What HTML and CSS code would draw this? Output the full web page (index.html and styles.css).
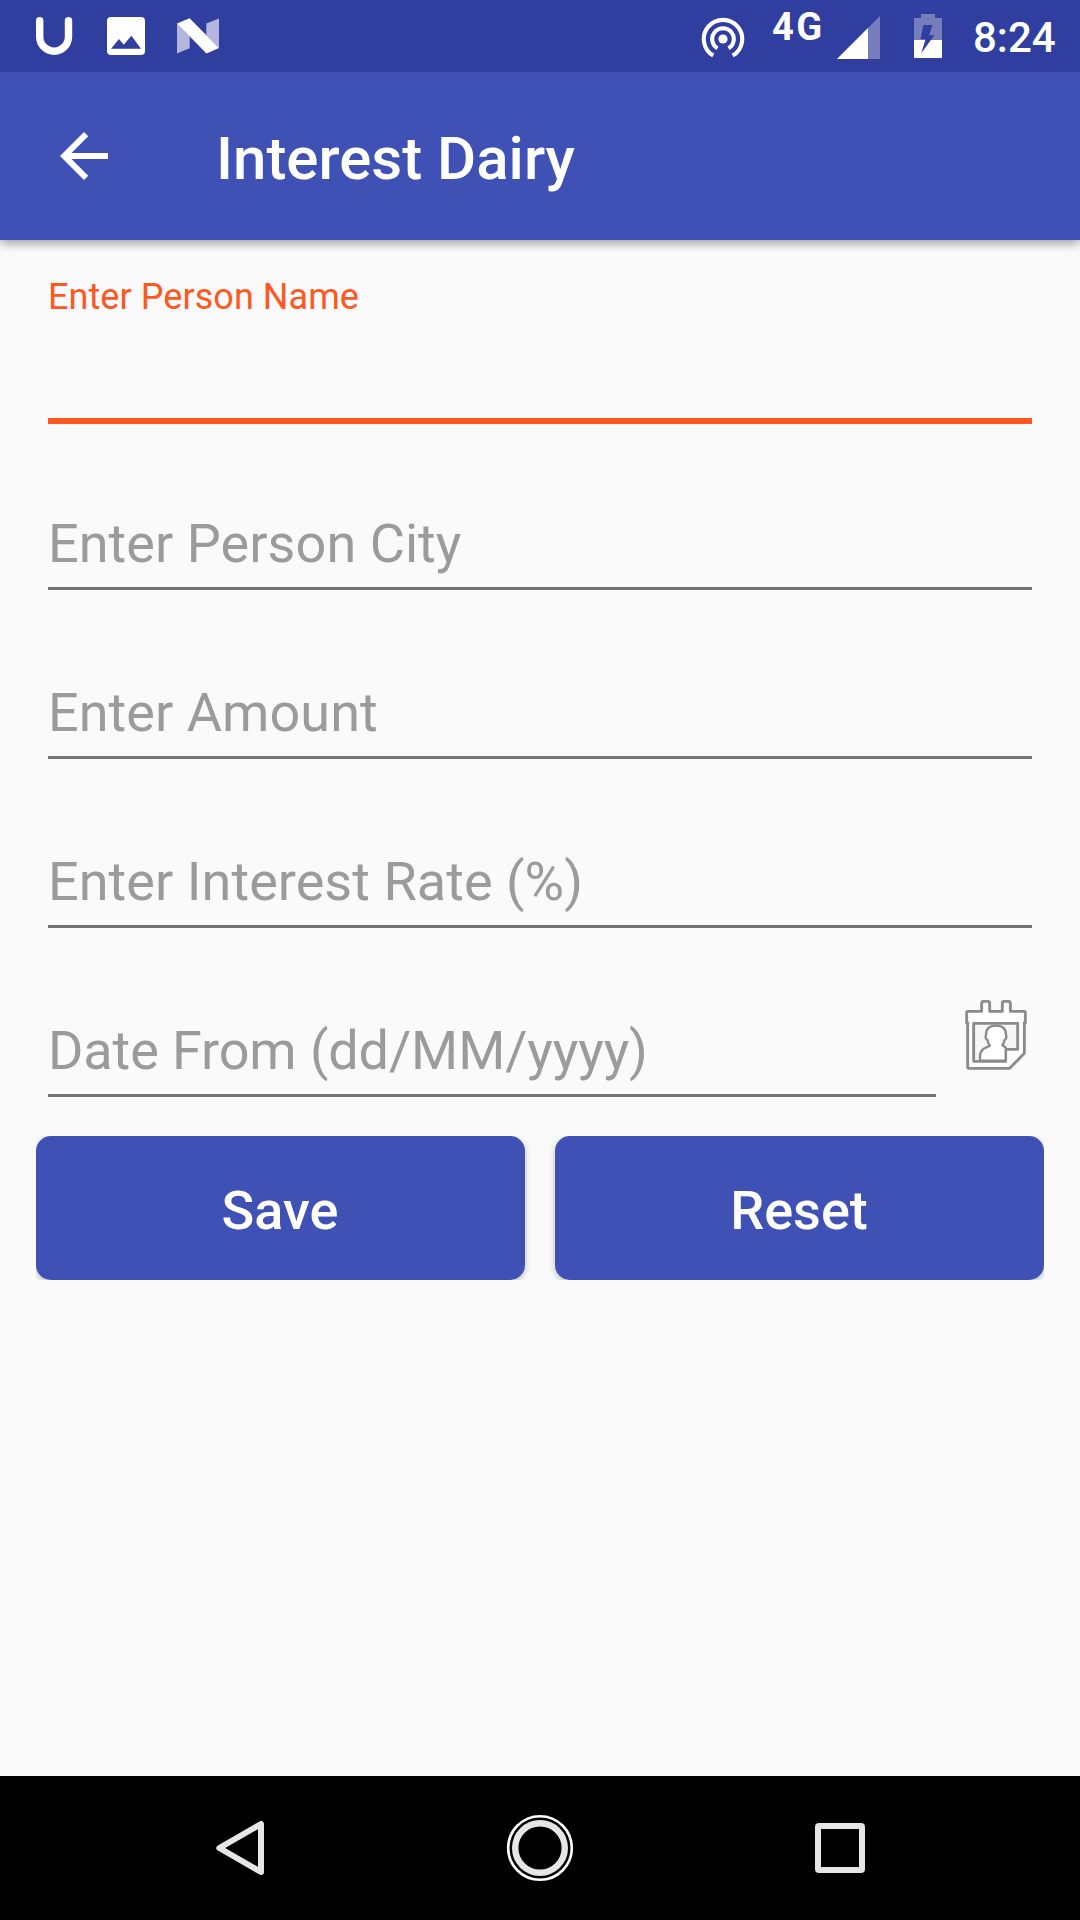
FILE: index.html
```html
<!DOCTYPE html>
<html lang="en">
<head>
<meta charset="utf-8">
<title>Interest Dairy</title>
<link rel="stylesheet" href="styles.css">
</head>
<body>
<div class="screen">
  <div class="status-bar">
    <div class="status-left">
      <svg width="38" height="40" viewBox="35 16 38 40"><path d="M39.7 20.7V36.8a14.4 14.4 0 0 0 28.8 0V20.7" fill="none" stroke="#fff" stroke-width="7.4" stroke-linecap="round"/></svg>
      <svg width="38" height="38" viewBox="107 17 38 38"><rect x="107" y="17" width="38" height="38" rx="4" fill="#fff"/><path d="M111 48.7l8-9.8 4.7 5.8 7.7-9 9.6 13z" fill="#303f9f"/></svg>
      <svg width="42" height="36" viewBox="177 18 42 36"><path d="M177 23.5l12.7 12.7V48.2L177 53.5zM206.3 23.5L219 18.5V48L206.3 35.3z" fill="#b3b7dd"/><path d="M177 23.5l12.6-5.2L219 48l-12.5 5.5z" fill="#fff"/></svg>
    </div>
    <div class="status-right">
      <svg class="hotspot" width="44" height="44" viewBox="-22 -22 44 44" fill="none" stroke="#fff" stroke-width="4.1"><circle r="4.6" fill="#fff" stroke="none"/><path d="M-5.5 9.3A10.8 10.8 0 1 1 5.5 9.3M-9.7 16.6A19.2 19.2 0 1 1 9.7 16.6"/></svg>
      <span class="network">4G</span>
      <svg class="signal" width="43" height="43" viewBox="0 0 43 43"><path d="M0 43L43 0V43z" fill="#757dbc"/><path d="M0 43L31 12V43z" fill="#fff"/></svg>
      <svg class="battery" width="28" height="44" viewBox="914 14 28 44"><path d="M921 14h14v4h7v22h-28V18h7z" fill="#757dbc"/><path d="M914 40h28v18h-28z" fill="#fff"/><path d="M923.3 25h9l-3 10.3h5L921.3 53.3l4.2-14h-5z" fill="#303f9f"/></svg>
      <span class="clock">8:24</span>
    </div>
  </div>
  <header class="toolbar">
    <svg width="72" height="72" viewBox="0 0 24 24" fill="#fff"><path d="M20 11H7.83l5.59-5.59L12 4l-8 8 8 8 1.41-1.41L7.83 13H20z"/></svg>
    <h1 class="title">Interest Dairy</h1>
  </header>
  <main class="form">
    <div class="field active">
      <label class="label" for="name">Enter Person Name</label>
      <input class="input" id="name" type="text">
    </div>
    <div class="field"><input class="input" type="text" placeholder="Enter Person City"></div>
    <div class="field"><input class="input" type="text" placeholder="Enter Amount"></div>
    <div class="field"><input class="input" type="text" placeholder="Enter Interest Rate (%)"></div>
    <div class="date-row">
      <div class="field"><input class="input" type="text" placeholder="Date From (dd/MM/yyyy)"></div>
      <svg class="calendar" width="63" height="72" viewBox="75 57 189 216" stroke="#8b8b8b" stroke-width="8.6" stroke-linejoin="round" fill="#fff">
        <path d="M80 128V98Q80 94 84 94H125V70Q125 64 131 64H143Q149 64 149 70V94H187V70Q187 64 193 64H205Q211 64 211 70V94H252Q256 94 256 98V128H253V220L209 265H88Q83 265 83 260V128Z"/>
        <path d="M101 130H233V208H197V244H101Z" fill="#f7f7f7"/>
        <path d="M120 242V226Q122 208 139 202L150 197Q143 189 143 181Q134 175 138 164Q138 137 168 137Q198 137 198 164Q202 175 193 181Q193 189 187 195L197 203V242Z" stroke-width="7"/>
      </svg>
    </div>
  </main>
  <div class="actions">
    <button class="button" type="button">Save</button>
    <button class="button" type="button">Reset</button>
  </div>
  <nav class="nav-bar">
    <svg width="50" height="58" viewBox="0 0 50 58"><path d="M46 5V53L4.3 29z" fill="none" stroke="#e6e6e6" stroke-width="6" stroke-linejoin="round"/></svg>
    <svg width="68" height="68" viewBox="-34 -34 68 68" fill="none"><circle r="31.8" stroke="#fff" stroke-width="2.6"/><circle r="24.8" stroke="#e6e6e6" stroke-width="6.4"/></svg>
    <svg width="50" height="50" viewBox="0 0 50 50"><rect x="3" y="3" width="44" height="44" rx="1" fill="none" stroke="#e6e6e6" stroke-width="6" stroke-linejoin="round"/></svg>
  </nav>
</div>
</body>
</html>
```
FILE: styles.css
```css
* { box-sizing: border-box; }
body { margin: 0; font-family: Roboto, sans-serif; background: #fafafa; }
svg { display: block; flex: none; }
.screen { width: 1080px; height: 1920px; display: flex; flex-direction: column; overflow: hidden; }

.status-bar { position: relative; z-index: 1; flex: none; height: 72px; background: #303f9f; color: #fff; display: flex; justify-content: space-between; }
.status-left { display: flex; align-items: center; gap: 33px; padding-left: 35px; }
.status-left svg:nth-child(2) { margin: 0 -1px 0 1px; }
.status-right { display: flex; align-items: flex-start; padding-right: 24px; }
.hotspot { margin-top: 17px; }
.network { width: 52px; margin: 5px 0 0 27px; font-size: 38px; line-height: 44px; font-weight: 700; letter-spacing: 2.5px; white-space: nowrap; }
.signal { margin: 16px 0 0 13px; }
.battery { margin: 14px 0 0 34px; }
.clock { width: 83px; margin: 13px 0 0 31px; font-size: 42px; line-height: 50px; font-weight: 500; white-space: nowrap; }

.toolbar { flex: none; height: 168px; padding-left: 48px; display: flex; align-items: center; gap: 96px; background: #3f51b5; color: #fff; box-shadow: 0 3px 10px rgba(0, 0, 0, .4); }
.title { margin: 6px 0 0; font-size: 60px; line-height: 72px; font-weight: 500; }

.form { padding: 0 48px; }
.field { height: 169px; display: flex; flex-direction: column; justify-content: flex-end; }
.input { display: block; width: 100%; height: 79px; padding: 0 0 12px; border: 0; border-bottom: 3px solid #737373; border-radius: 0; outline: 0; background: none; font: 400 54px/64px Roboto, sans-serif; letter-spacing: .05px; color: #212121; }
.input::placeholder { color: #9b9b9b; opacity: 1; }
.active { height: 184px; margin-bottom: -3px; padding-top: 35px; justify-content: space-between; }
.active .input { border-bottom: 6px solid #ff5722; }
.label { font-size: 36px; line-height: 44px; letter-spacing: .06px; color: #ff5722; }
.date-row { display: flex; }
.date-row .field { width: 888px; }
.date-row .input { letter-spacing: -.11px; }
.calendar { margin: 71px 0 0 29px; }

.actions { display: flex; gap: 30px; height: 144px; margin: 39px 36px 0; overflow: hidden; }
.button { flex: 1; padding: 6px 1px 0 0; border: 0; border-radius: 15px; background: #3f51b5; color: #fff; font: 500 54px/64px Roboto, sans-serif; box-shadow: 0 2px 6px rgba(0, 0, 0, .25); }

.nav-bar { flex: none; height: 144px; margin-top: auto; padding: 0 215px; display: flex; align-items: center; justify-content: space-between; background: #000; }
```
